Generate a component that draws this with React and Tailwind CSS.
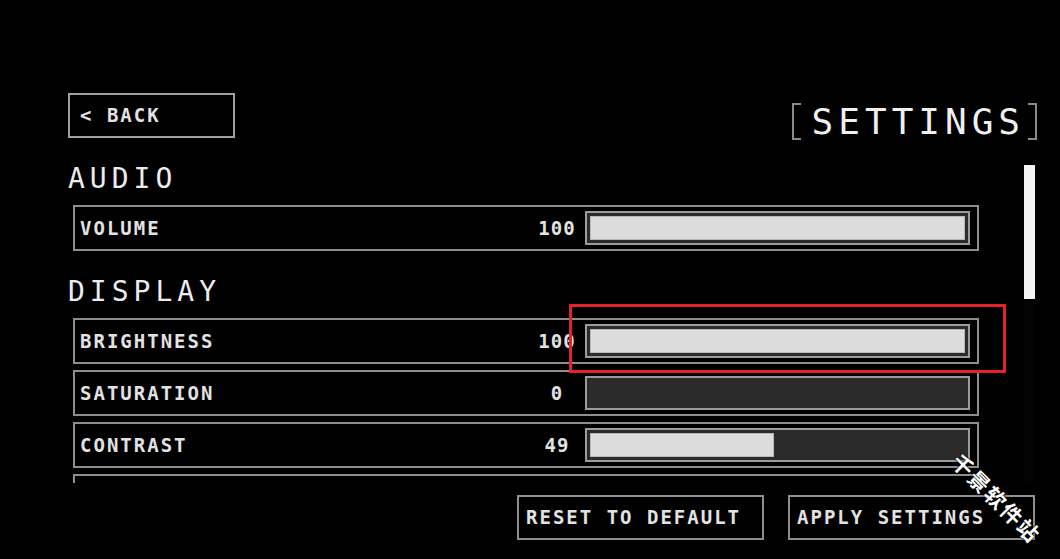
import React from "react";

const mono = { fontFamily: '"DejaVu Sans Mono", "Liberation Mono", "Noto Sans CJK SC", monospace' };

const display = [
  { label: "BRIGHTNESS", value: 100 },
  { label: "SATURATION", value: 0 },
  { label: "CONTRAST", value: 49 },
];

function Slider({ value }) {
  return (
    <div className="w-[385px] h-[34px] border-2 border-[#9c9c9c] bg-[#2b2b2b] p-[3px]">
      {value > 0 && (
        <div
          className="h-full bg-[#dcdcdc] border border-[#b8b8b8]"
          style={{ width: `${value}%` }}
        />
      )}
    </div>
  );
}

function Row({ label, value }) {
  return (
    <div className="ml-[5px] w-[906px] h-[46px] shrink-0 border-2 border-[#8e8e8e] flex items-center pl-[5px] pr-[7px]">
      <span className="flex-1 text-[19px] font-bold tracking-[2px] text-[#e2e2e2]">{label}</span>
      <span className="w-[50px] mr-[3px] text-center text-[19px] font-bold tracking-[1px] text-[#e2e2e2]">
        {value}
      </span>
      <Slider value={value} />
    </div>
  );
}

function SectionTitle({ children, className }) {
  return (
    <div className={`text-[28px] leading-[28px] tracking-[5px] text-[#ececec] ${className}`}>
      {children}
    </div>
  );
}

export default function App() {
  return (
    <div className="relative w-[1060px] h-[559px] bg-black overflow-hidden" style={mono}>
      <div className="pt-[93px] pl-[68px] pr-[23px]">
        {/* header */}
        <div className="flex justify-between items-start">
          <button className="w-[167px] h-[45px] border-2 border-[#a0a0a0] text-left pl-[10px] text-[19px] font-bold tracking-[2px] text-[#e2e2e2]">
            &lt; BACK
          </button>
          <div className="mt-[10px] flex items-center h-[37px]">
            <div className="w-[9px] h-[37px] border-2 border-r-0 border-[#8a8a8a]" />
            <span className="ml-[11px] text-[36px] leading-[36px] tracking-[5px] text-[#f0f0f0]">
              SETTINGS
            </span>
            <div className="ml-[3px] w-[9px] h-[37px] border-2 border-l-0 border-[#8a8a8a]" />
          </div>
        </div>

        {/* content + scrollbar */}
        <div className="flex">
          <div className="w-[911px] h-[343px] overflow-hidden">
            <SectionTitle className="mt-[25px] mb-[12px]">AUDIO</SectionTitle>
            <Row label="VOLUME" value={100} />
            <SectionTitle className="mt-[27px] mb-[12px]">DISPLAY</SectionTitle>
            <div className="flex flex-col gap-[6px]">
              {display.map((r) => (
                <Row key={r.label} label={r.label} value={r.value} />
              ))}
              {/* next row, scrolled out of view */}
              <div className="ml-[5px] w-[906px] h-[46px] shrink-0 border-2 border-[#8e8e8e]" />
            </div>
          </div>
          <div className="ml-[45px] mt-[25px] w-[11px] h-[318px] bg-[#030303]">
            <div className="w-full h-[134px] bg-[#f4f4f4]" />
          </div>
        </div>

        {/* footer buttons */}
        <div className="mt-[12px] mr-[2px] flex justify-end gap-[24px]">
          <button className="w-[247px] h-[45px] border-2 border-[#8e8e8e] text-left pl-[7px] text-[19px] font-bold tracking-[2px] text-[#e2e2e2]">
            RESET TO DEFAULT
          </button>
          <button className="w-[247px] h-[45px] border-2 border-[#8e8e8e] text-left pl-[7px] text-[19px] font-bold tracking-[2px] text-[#e2e2e2]">
            APPLY SETTINGS
          </button>
        </div>
      </div>

      {/* highlight */}
      <div className="absolute left-[569px] top-[304px] w-[437px] h-[69px] border-[3px] border-[#e3232b]" />

      {/* watermark */}
      <span
        className="absolute left-[938px] top-[489px] w-[124px] h-[24px] rotate-45 text-[21px] leading-[24px] tracking-[2px] font-bold text-white [text-shadow:0_0_2px_#000,0_0_2px_#000]"
        style={{ fontFamily: '"Noto Sans CJK SC", sans-serif' }}
      >
        千景软件站
      </span>
    </div>
  );
}
